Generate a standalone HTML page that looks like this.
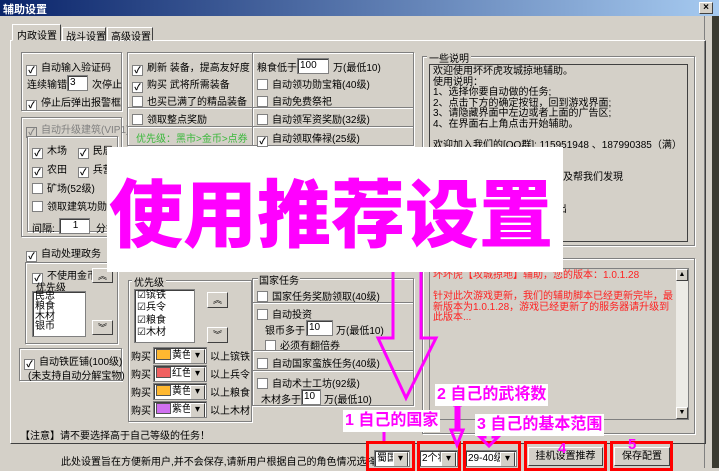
<!DOCTYPE html>
<html><head><meta charset="utf-8"><style>
*{margin:0;padding:0;box-sizing:border-box}
body{width:719px;height:468px;overflow:hidden;background:#d4d0c8;font-family:"Liberation Sans","Noto Sans CJK SC",sans-serif;font-size:10px;color:#000;position:relative}
.a{position:absolute;white-space:nowrap}
.g{position:absolute;border:1px solid #808080;box-shadow:1px 1px 0 #fff, inset 1px 1px 0 #fff}
.cb{display:inline-block;width:11px;height:11px;background:#fff;border:1px solid #808080;vertical-align:-2px;margin-right:4px;font-size:9px;line-height:9px;text-align:center;font-weight:bold}
.in{position:absolute;background:#fff;border:1px solid #808080;box-shadow:inset 1px 1px 0 #404040;padding-left:2px;font-size:10px;line-height:14px}
.btn{position:absolute;background:#d4d0c8;border:1px solid;border-color:#fff #404040 #404040 #fff;text-align:center}
.sel{position:absolute;background:#fff;border:1px solid #808080;box-shadow:inset 1px 1px 0 #404040;font-size:10px;line-height:15px;padding-left:2px;overflow:hidden}
.sel:after{content:"▾";position:absolute;right:1px;top:1px;width:13px;height:13px;background:#d4d0c8;border:1px solid;border-color:#fff #404040 #404040 #fff;line-height:11px;text-align:center;font-size:10px}
.sw{display:inline-block;width:15px;height:11px;border:1px solid #555;vertical-align:-2px;margin-right:1px}
.mg{color:#ff00ff;font-weight:bold}
.lbl{position:absolute;background:#fff;color:#ff00ff;font-weight:bold;font-size:16px;line-height:22px;padding:0 2px}
.rb{position:absolute;border:3px solid #ff0000}
</style></head><body>
<div class="a" style="left:0;top:0;width:719px;height:16px;background:linear-gradient(90deg,#0a246a,#a6caf0)"></div>
<div class="a" style="left:3px;top:1px;color:#fff;font-weight:bold;font-size:11px">辅助设置</div>
<div class="btn" style="left:699px;top:2px;width:14px;height:12px;font-size:10px;line-height:10px;font-weight:bold">×</div>
<div class="a" style="left:712px;top:16px;width:7px;height:452px;background:#3a3a30"></div>
<div class="a" style="left:704px;top:16px;width:8px;height:452px;border-left:1px solid #808080"></div>
<!-- tabs -->
<div class="a" style="left:10px;top:40px;width:696px;height:404px;border:1px solid;border-color:#fff #404040 #404040 #fff"></div>
<div class="a" style="left:12px;top:24px;width:49px;height:17px;border:1px solid;border-color:#fff #404040 transparent #fff;background:#d4d0c8;padding:2px 4px">内政设置</div>
<div class="a" style="left:62px;top:27px;width:44px;height:14px;border:1px solid;border-color:#fff #404040 transparent #fff;padding:0 3px">战斗设置</div>
<div class="a" style="left:107px;top:27px;width:46px;height:14px;border:1px solid;border-color:#fff #404040 transparent #fff;padding:0 3px">高级设置</div>
<!-- left group 1 -->
<div class="g" style="left:21px;top:52px;width:101px;height:59px"></div>
<div class="a" style="left:26px;top:59px"><span class="cb">✓</span>自动输入验证码</div>
<div class="a" style="left:27px;top:76px">连续输错</div>
<div class="in" style="left:67px;top:75px;width:21px;height:16px">3</div>
<div class="a" style="left:92px;top:76px">次停止</div>
<div class="a" style="left:26px;top:94px"><span class="cb">✓</span>停止后弹出报警框</div>
<div class="g" style="left:21px;top:117px;width:101px;height:120px"></div>
<div class="a" style="left:26px;top:121px;color:#808080"><span class="cb" style="background:#d4d0c8">✓</span>自动升级建筑(VIP1)</div>
<div class="g" style="left:27px;top:136px;width:91px;height:96px"></div>
<div class="a" style="left:32px;top:142px"><span class="cb">✓</span>木场 <span class="cb" style="margin-left:8px">✓</span>民居</div>
<div class="a" style="left:32px;top:161px"><span class="cb">✓</span>农田 <span class="cb" style="margin-left:8px">✓</span>兵营</div>
<div class="a" style="left:32px;top:180px"><span class="cb"></span>矿场(52级)</div>
<div class="a" style="left:32px;top:198px"><span class="cb"></span>领取建筑功勋</div>
<div class="a" style="left:32px;top:220px">间隔:</div>
<div class="in" style="left:59px;top:218px;width:31px;height:16px;text-align:center">1</div>
<div class="a" style="left:96px;top:220px">分钟</div>
<!-- middle top -->
<div class="g" style="left:127px;top:52px;width:126px;height:94px"></div>
<div class="a" style="left:128px;top:107px;width:124px;border-top:1px solid #808080;border-bottom:1px solid #fff"></div>
<div class="a" style="left:128px;top:126px;width:124px;border-top:1px solid #808080;border-bottom:1px solid #fff"></div>
<div class="a" style="left:132px;top:59px"><span class="cb">✓</span>刷新 装备，提高友好度</div>
<div class="a" style="left:132px;top:76px"><span class="cb">✓</span>购买 武将所需装备</div>
<div class="a" style="left:132px;top:93px"><span class="cb"></span>也买已满了的精品装备</div>
<div class="a" style="left:132px;top:111px"><span class="cb"></span>领取整点奖励</div>
<div class="a" style="left:136px;top:130px;color:#3cb83c">优先级：黑市&gt;金币&gt;点券</div>
<div class="g" style="left:252px;top:52px;width:162px;height:94px"></div>
<div class="a" style="left:253px;top:107px;width:160px;border-top:1px solid #808080;border-bottom:1px solid #fff"></div>
<div class="a" style="left:253px;top:126px;width:160px;border-top:1px solid #808080;border-bottom:1px solid #fff"></div>
<div class="a" style="left:257px;top:59px">粮食低于</div>
<div class="in" style="left:297px;top:58px;width:32px;height:16px">100</div>
<div class="a" style="left:333px;top:59px">万(最低10)</div>
<div class="a" style="left:257px;top:76px"><span class="cb"></span>自动领功勋宝箱(40级)</div>
<div class="a" style="left:257px;top:93px"><span class="cb"></span>自动免费祭祀</div>
<div class="a" style="left:257px;top:111px"><span class="cb"></span>自动领军资奖励(32级)</div>
<div class="a" style="left:257px;top:130px"><span class="cb">✓</span>自动领取俸禄(25级)</div>
<!-- description -->
<div class="g" style="left:422px;top:56px;width:273px;height:190px"></div>
<div class="a" style="left:427px;top:50px;background:#d4d0c8;padding:0 2px">一些说明</div>
<div class="a" style="left:429px;top:64px;width:259px;height:178px;border:1px solid #404040;background:#d4d0c8;padding:2px 3px;line-height:10.6px;font-size:10px">欢迎使用坏坏虎攻城掠地辅助。<br>使用说明：<br>1、选择你要自动做的任务;<br>2、点击下方的确定按钮，回到游戏界面;<br>3、请隐藏界面中左边或者上面的广告区;<br>4、在界面右上角点击开始辅助。<br><br>欢迎加入我们的[QQ群]: 115951948 、187990385（满）<br>官网: www.huaihuaihu.com<br>淘宝: huaihuaihu.taobao.com<br>欢迎大家提出更好的意见，以及帮我们发現<br>BUG<br><br>快捷键: ctrl+alt+shift+H = 呼出</div>
<div class="g" style="left:422px;top:258px;width:273px;height:176px"></div>
<div class="a" style="left:429px;top:268px;width:260px;height:152px;border:1px solid #808080;background:#d4d0c8;padding:2px 14px 2px 3px;color:#ff2020;line-height:10.5px;font-size:10px;white-space:normal">坏坏虎【攻城掠地】辅助，您的版本：1.0.1.28<br><br>针对此次游戏更新，我们的辅助脚本已经更新完毕，最新版本为1.0.1.28，游戏已经更新了的服务器请升级到此版本...</div>
<div class="a" style="left:676px;top:269px;width:12px;height:150px;background:#ecebe6"></div>
<div class="btn" style="left:676px;top:269px;width:12px;height:12px;font-size:7px;line-height:10px">▲</div>
<div class="btn" style="left:676px;top:407px;width:12px;height:12px;font-size:7px;line-height:10px">▼</div>
<!-- lower left -->
<div class="a" style="left:26px;top:245px"><span class="cb">✓</span>自动处理政务</div>
<div class="g" style="left:25px;top:262px;width:93px;height:82px"></div>
<div class="a" style="left:32px;top:267px"><span class="cb">✓</span>不使用金币</div>
<div class="a" style="left:36px;top:279px">优先级</div>
<div class="in" style="left:32px;top:291px;width:54px;height:46px;line-height:10px;font-size:10px">民忠<br>粮食<br>木材<br>银币</div>
<div class="btn" style="left:92px;top:268px;width:21px;height:15px;font-size:9px">︽</div>
<div class="btn" style="left:92px;top:320px;width:21px;height:15px;font-size:9px">︾</div>
<div class="g" style="left:19px;top:348px;width:103px;height:33px"></div>
<div class="a" style="left:24px;top:353px"><span class="cb">✓</span>自动铁匠铺(100级)</div>
<div class="a" style="left:28px;top:367px">(未支持自动分解宝物)</div>
<!-- middle lower -->
<div class="g" style="left:128px;top:280px;width:124px;height:142px"></div>
<div class="a" style="left:132px;top:274px;background:#d4d0c8;padding:0 2px">优先级</div>
<div class="in" style="left:134px;top:289px;width:61px;height:54px;font-size:10px;line-height:12.3px">☑镔铁<br>☑兵令<br>☑粮食<br>☑木材</div>
<div class="btn" style="left:207px;top:292px;width:21px;height:16px;font-size:9px">︽</div>
<div class="btn" style="left:207px;top:327px;width:21px;height:16px;font-size:9px">︾</div>
<div class="a" style="left:131px;top:349px;line-height:18px">购买<br>购买<br>购买<br>购买</div>
<div class="sel" style="left:153px;top:347px;width:54px;height:17px"><span class="sw" style="background:#ffb830"></span>黄色</div>
<div class="sel" style="left:153px;top:365px;width:54px;height:17px"><span class="sw" style="background:#f06060"></span>红色</div>
<div class="sel" style="left:153px;top:383px;width:54px;height:17px"><span class="sw" style="background:#ffb830"></span>黄色</div>
<div class="sel" style="left:153px;top:401px;width:54px;height:17px"><span class="sw" style="background:#d070f0"></span>紫色</div>
<div class="a" style="left:210px;top:349px;line-height:18px">以上镔铁<br>以上兵令<br>以上粮食<br>以上木材</div>
<!-- right lower -->
<div class="g" style="left:252px;top:278px;width:162px;height:128px"></div>
<div class="a" style="left:258px;top:272px;background:#d4d0c8;padding:0 1px">国家任务</div>
<div class="a" style="left:257px;top:288px"><span class="cb"></span>国家任务奖励领取(40级)</div>
<div class="a" style="left:253px;top:302px;width:160px;border-top:1px solid #808080;border-bottom:1px solid #fff"></div>
<div class="a" style="left:257px;top:306px"><span class="cb"></span>自动投资</div>
<div class="a" style="left:265px;top:322px">银币多于</div>
<div class="in" style="left:306px;top:320px;width:27px;height:16px">10</div>
<div class="a" style="left:336px;top:322px">万(最低10)</div>
<div class="a" style="left:265px;top:337px"><span class="cb"></span>必须有翻倍券</div>
<div class="a" style="left:253px;top:350px;width:160px;border-top:1px solid #808080;border-bottom:1px solid #fff"></div>
<div class="a" style="left:257px;top:355px"><span class="cb"></span>自动国家蛮族任务(40级)</div>
<div class="a" style="left:253px;top:370px;width:160px;border-top:1px solid #808080;border-bottom:1px solid #fff"></div>
<div class="a" style="left:257px;top:375px"><span class="cb"></span>自动术士工坊(92级)</div>
<div class="a" style="left:261px;top:391px">木材多于</div>
<div class="in" style="left:301px;top:389px;width:20px;height:16px">10</div>
<div class="a" style="left:324px;top:391px">万(最低10)</div>
<div class="a" style="left:20px;top:427px">【注意】请不要选择高于自己等级的任务！</div>
<div class="a" style="left:61px;top:453px">此处设置旨在方便新用户,并不会保存,请新用户根据自己的角色情况选择:</div>
<!-- bottom controls -->
<div class="sel" style="left:374px;top:450px;width:36px;height:17px">蜀国</div>
<div class="sel" style="left:419px;top:450px;width:39px;height:17px">2个将</div>
<div class="sel" style="left:465px;top:450px;width:52px;height:17px">29-40级</div>
<div class="btn" style="left:528px;top:447px;width:75px;height:19px;line-height:17px">挂机设置推荐</div>
<div class="btn" style="left:614px;top:447px;width:56px;height:19px;line-height:17px">保存配置</div>
<div class="rb" style="left:366px;top:441px;width:49px;height:30px"></div>
<div class="rb" style="left:417px;top:441px;width:44px;height:30px"></div>
<div class="rb" style="left:463px;top:441px;width:58px;height:30px"></div>
<div class="rb" style="left:524px;top:441px;width:83px;height:30px"></div>
<div class="rb" style="left:610px;top:441px;width:63px;height:30px"></div>
<!-- overlay -->
<div class="a" style="left:107px;top:147px;width:456px;height:125px;background:#fff"></div>
<div class="a mg" style="left:109px;top:160px;font-size:74px;line-height:100px;font-family:'Noto Sans CJK SC',sans-serif;font-weight:900">使用推荐设置</div>
<svg class="a" style="left:0;top:0" width="719" height="468">
<g fill="none" stroke="#ff00ff" stroke-width="3">
<path d="M393 272 L393 338 L378 338 L406 398 L436 338 L421 338 L421 272"/>
<path d="M456 405 L456 430 L451 430 L457 445 L463 430 L459 430 L459 405 M453 405 L462 405"/>
<path d="M485 425 L485 437 L480 437 L489 446 L498 437 L493 437 L493 425"/>
<path d="M384 430 L384 441"/>
</g>
</svg>
<div class="lbl" style="left:343px;top:410px">1 自己的国家</div>
<div class="lbl" style="left:435px;top:384px">2 自己的武将数</div>
<div class="lbl" style="left:475px;top:414px">3 自己的基本范围</div>
<div class="a mg" style="left:558px;top:440px;font-size:15px">4</div>
<div class="a mg" style="left:628px;top:436px;font-size:15px">5</div>
</body></html>
